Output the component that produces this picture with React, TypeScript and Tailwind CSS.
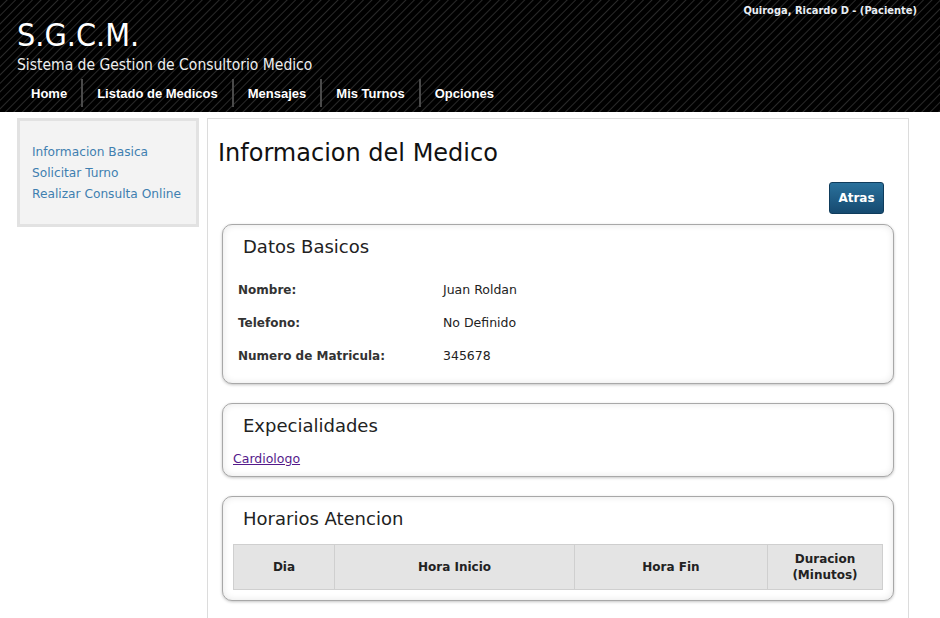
import React from 'react';

const navItems = ['Home', 'Listado de Medicos', 'Mensajes', 'Mis Turnos', 'Opciones'];
const sideLinks = ['Informacion Basica', 'Solicitar Turno', 'Realizar Consulta Online'];

const Box = ({ title, children, className = '' }: { title: string; children?: React.ReactNode; className?: string }) => (
  <div
    className={`rounded-[10px] border border-[#a8a8a8] bg-white shadow-[0_1px_3px_#c4c4c4,inset_0_0_7px_#e6e6e6] ${className}`}
  >
    <h2 className="pl-5 text-[18px] leading-[22px] text-[#222]">{title}</h2>
    {children}
  </div>
);

const App = () => {
  return (
    <div className="min-h-screen bg-white font-['DejaVu_Sans',sans-serif] text-[12px] text-[#222]">
      {/* header */}
      <div className="h-[112px] bg-[repeating-linear-gradient(135deg,#000_0px,#000_4px,#2a2a2a_5px,#000_6px)] text-white relative">
        <div className="absolute right-[23px] top-[3px] font-['DejaVu_Sans_Condensed',sans-serif] text-[11px] font-bold text-[#e8eef4]">
          Quiroga, Ricardo D - (Paciente)
        </div>
        <div className="pl-[17px] pt-[17px] font-['DejaVu_Sans_Condensed',sans-serif]">
          <div className="text-[32px] leading-[36px]">S.G.C.M.</div>
          <div className="text-[15.5px] leading-[20px] mt-[2px] text-[#eee]">Sistema de Gestion de Consultorio Medico</div>
        </div>
        <nav className="flex items-center pl-[17px] mt-[4px] h-[28px]">
          {navItems.map((item, i) => (
            <div
              key={item}
              className={`px-[14px] h-full flex items-center pt-[1px] font-['Liberation_Sans',Arial,sans-serif] font-bold text-[13px] ${
                i < navItems.length - 1 ? 'border-r-2 border-[#4a4a4a]' : ''
              }`}
            >
              {item}
            </div>
          ))}
        </nav>
      </div>

      {/* body */}
      <div className="flex items-start gap-2 pl-[17px] pt-[6px]">
        <aside className="w-[182px] h-[109px] bg-[#f3f3f3] border-[3px] border-[#e2e2e2] pl-3 pt-[21px]">
          {sideLinks.map((l) => (
            <a key={l} href="#" className="block text-[12.2px] leading-[21px] text-[#3f7fb0]">
              {l}
            </a>
          ))}
        </aside>

        <main className="w-[702px] min-h-[510px] border border-[#dcdcdc] border-b-0 pl-[10px] pr-[14px]">
          <h1 className="mt-[19px] text-[24px] leading-[30px] text-[#111]">Informacion del Medico</h1>
          <div className="flex justify-end pr-[10px] mt-[14px]">
            <button className="w-[55px] h-[32px] rounded-[3px] border border-[#0f3c5c] bg-[linear-gradient(#2a719c,#164a70)] text-white font-bold text-[12px]">
              Atras
            </button>
          </div>

          <div className="pl-[4px] mt-[10px] flex flex-col gap-[19px]">
            <Box title="Datos Basicos" className="h-[160px] pt-[11px]">
              <div className="mt-[23px] pl-[15px] flex flex-col gap-[15px] text-[12px]">
                {[
                  ['Nombre:', 'Juan Roldan'],
                  ['Telefono:', 'No Definido'],
                  ['Numero de Matricula:', '345678'],
                ].map(([k, v]) => (
                  <div key={k} className="flex items-baseline leading-[17px]">
                    <span className="w-[205px] font-bold text-[#333]">{k}</span>
                    <span className="text-[12.5px]">{v}</span>
                  </div>
                ))}
              </div>
            </Box>

            <Box title="Expecialidades" className="h-[74px] pt-[11px]">
              <a href="#" className="block mt-[13px] pl-[10px] text-[12.5px] text-[#551a8b] underline">
                Cardiologo
              </a>
            </Box>

            <Box title="Horarios Atencion" className="h-[105px] pt-[11px]">
              <div className="px-[10px] mt-[14px]">
                <table className="w-full border-collapse text-[12px] font-bold text-[#222]">
                  <thead>
                    <tr className="h-[45px] bg-[#e4e4e4]">
                      <th className="w-[101px] border border-[#cfcfcf]">Dia</th>
                      <th className="w-[240px] border border-[#cfcfcf]">Hora Inicio</th>
                      <th className="w-[193px] border border-[#cfcfcf]">Hora Fin</th>
                      <th className="border border-[#cfcfcf] leading-[16px]">
                        Duracion
                        <br />
                        (Minutos)
                      </th>
                    </tr>
                  </thead>
                </table>
              </div>
            </Box>
          </div>
        </main>
      </div>
    </div>
  );
};

export default App;
